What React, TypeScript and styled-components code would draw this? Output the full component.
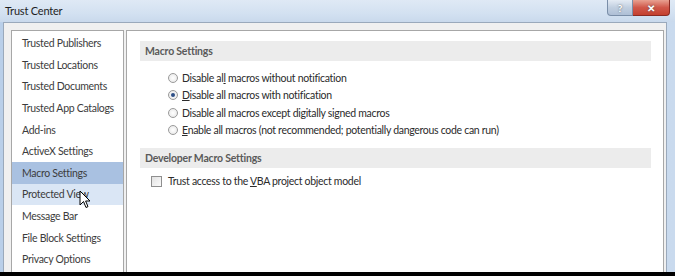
import React, {useState} from 'react';
import styled, {createGlobalStyle} from 'styled-components';

const GlobalStyle = createGlobalStyle`
  html, body {
    margin: 0;
    padding: 0;
    background: #000;
  }
  body {
    font-family: Lato, "Noto Sans", sans-serif;
  }
`;

const WindowEl = styled.div`
  width: 675px;
  height: 276px;
  display: flex;
  flex-direction: column;
  overflow: hidden;
  background: linear-gradient(90deg, #b9cfe9 0%, #d6e3f2 40%, #c9daee 100%);
`;

const TitleBar = styled.div`
  height: 22px;
  flex: none;
  display: flex;
  align-items: flex-start;
  background: linear-gradient(180deg, #dfe9f5 0%, #d3e1f1 60%, #c9d9ec 100%);
`;

const Title = styled.div`
  flex-grow: 1;
  padding: 4px 0 0 5px;
  font-size: 11px;
  letter-spacing: -0.2px;
  color: #1e1e1e;
  line-height: 14px;
`;

const CaptionButton = styled.div<{ $close?: boolean }>`
  height: 15px;
  width: ${p => p.$close ? '36px' : '24px'};
  display: flex;
  align-items: center;
  justify-content: center;
  font-size: 10px;
  font-weight: bold;
  color: #fff;
  border: 1px solid ${p => p.$close ? '#8a2b23' : '#7a8ea8'};
  border-top: none;
  border-left: ${p => p.$close ? 'none' : undefined};
  border-radius: ${p => p.$close ? '0 0 4px 0' : '0 0 0 4px'};
  background: ${p => p.$close
    ? 'linear-gradient(180deg, #e8a191 0%, #d0584a 50%, #c4402f 100%)'
    : 'linear-gradient(180deg, #e4ebf4 0%, #c1cfe0 50%, #aebfd6 100%)'};
  text-shadow: 0 0 2px #555;
  margin-right: ${p => p.$close ? '5px' : '0'};
`;

const Body = styled.div`
  flex: 1;
  margin: 0 8px 0 3px;
  border: 1px solid #9aa9bb;
  border-bottom: none;
  background: #f0f0f0;
  display: flex;
  gap: 2px;
  padding: 7px 2px 0 7px;
  min-height: 0;
`;

const Nav = styled.ul`
  width: 111px;
  flex: none;
  margin: 0;
  padding: 1.5px 0 0 0;
  list-style: none;
  background: #fff;
  border: 1px solid #a7a7a7;
  border-bottom: none;
`;

const NavItem = styled.li<{ $sel?: boolean; $hover?: boolean }>`
  position: relative;
  height: 21.6px;
  display: flex;
  align-items: center;
  padding-left: 10px;
  font-size: 10.5px;
  letter-spacing: -0.3px;
  white-space: nowrap;
  color: #3c3c3c;
  background: ${p => p.$sel ? '#a9c1e1' : p.$hover ? '#dae6f5' : 'transparent'};
`;

const Cursor = styled.svg`
  position: absolute;
  left: 67px;
  top: 6px;
`;

const Content = styled.div`
  flex: 1;
  background: #fff;
  border: 1px solid #a7a7a7;
  border-bottom: none;
  padding: 10px 12px 0 13px;
`;

const SectionHeader = styled.div`
  height: 20px;
  display: flex;
  align-items: center;
  padding-left: 5px;
  background: #ececec;
  font-size: 10.5px;
  letter-spacing: -0.2px;
  font-weight: bold;
  color: #5a5a5a;
`;

const OptionList = styled.div`
  display: flex;
  flex-direction: column;
  padding: 8px 0 9px 28px;
`;

const OptionRow = styled.label`
  height: 17.5px;
  display: flex;
  align-items: center;
  gap: 4px;
  font-size: 10.5px;
  letter-spacing: -0.3px;
  white-space: nowrap;
  color: #2b2b2b;
`;

const Radio = styled.span<{ $checked?: boolean }>`
  width: 10px;
  height: 10px;
  border-radius: 50%;
  box-sizing: border-box;
  border: 1px solid #9a9a9a;
  background: radial-gradient(circle, #ffffff 0%, #e4e4e4 100%);
  display: flex;
  align-items: center;
  justify-content: center;
  &::after {
    content: '';
    display: ${p => p.$checked ? 'block' : 'none'};
    width: 4px;
    height: 4px;
    border-radius: 50%;
    background: #2d4f86;
  }
`;

const CheckRow = styled.label`
  height: 26px;
  display: flex;
  align-items: center;
  gap: 6px;
  padding-left: 11px;
  font-size: 10.5px;
  letter-spacing: -0.3px;
  white-space: nowrap;
  color: #2b2b2b;
`;

const Checkbox = styled.span`
  width: 11px;
  height: 11px;
  box-sizing: border-box;
  border: 1px solid #8f8f8f;
  background: linear-gradient(135deg, #e2e2e2 0%, #fbfbfb 100%);
`;

const BottomEdge = styled.div`
  height: 4px;
  flex: none;
  background: #000;
`;

const navEntries = [
  'Trusted Publishers',
  'Trusted Locations',
  'Trusted Documents',
  'Trusted App Catalogs',
  'Add-ins',
  'ActiveX Settings',
  'Macro Settings',
  'Protected View',
  'Message Bar',
  'File Block Settings',
  'Privacy Options',
];

// label text with an access key underlined at index u
const Accel = ({text, u}: { text: string; u: number }) => (
  <span>
    {text.slice(0, u)}<u>{text[u]}</u>{text.slice(u + 1)}
  </span>
);

const macroOptions = [
  {text: 'Disable all macros without notification', u: 10},
  {text: 'Disable all macros with notification', u: 0},
  {text: 'Disable all macros except digitally signed macros', u: -1},
  {text: 'Enable all macros (not recommended; potentially dangerous code can run)', u: 0},
];

export default function App() {
  const [choice, setChoice] = useState(1);

  return (
    <WindowEl>
      <GlobalStyle/>
      <TitleBar>
        <Title>Trust Center</Title>
        <CaptionButton>?</CaptionButton>
        <CaptionButton $close>✕</CaptionButton>
      </TitleBar>
      <Body>
        <Nav>
          {navEntries.map((name) => (
            <NavItem key={name} $sel={name == 'Macro Settings'} $hover={name == 'Protected View'}>
              {name}
              {name == 'Protected View' && (
                <Cursor width="12" height="19" viewBox="0 0 12 19">
                  <path d="M1 1 L1 15 L4.5 11.5 L7 17.5 L9 16.6 L6.6 11 L11 11 Z" fill="#fff" stroke="#000" strokeWidth="1" strokeLinejoin="round"/>
                </Cursor>
              )}
            </NavItem>
          ))}
        </Nav>
        <Content>
          <SectionHeader>Macro Settings</SectionHeader>
          <OptionList>
            {macroOptions.map((o, i) => (
              <OptionRow key={o.text} onClick={() => setChoice(i)}>
                <Radio $checked={choice == i}/>
                {o.u >= 0 ? <Accel text={o.text} u={o.u}/> : <span>{o.text}</span>}
              </OptionRow>
            ))}
          </OptionList>
          <SectionHeader>Developer Macro Settings</SectionHeader>
          <CheckRow>
            <Checkbox/>
            <Accel text="Trust access to the VBA project object model" u={20}/>
          </CheckRow>
        </Content>
      </Body>
      <BottomEdge/>
    </WindowEl>
  );
}
